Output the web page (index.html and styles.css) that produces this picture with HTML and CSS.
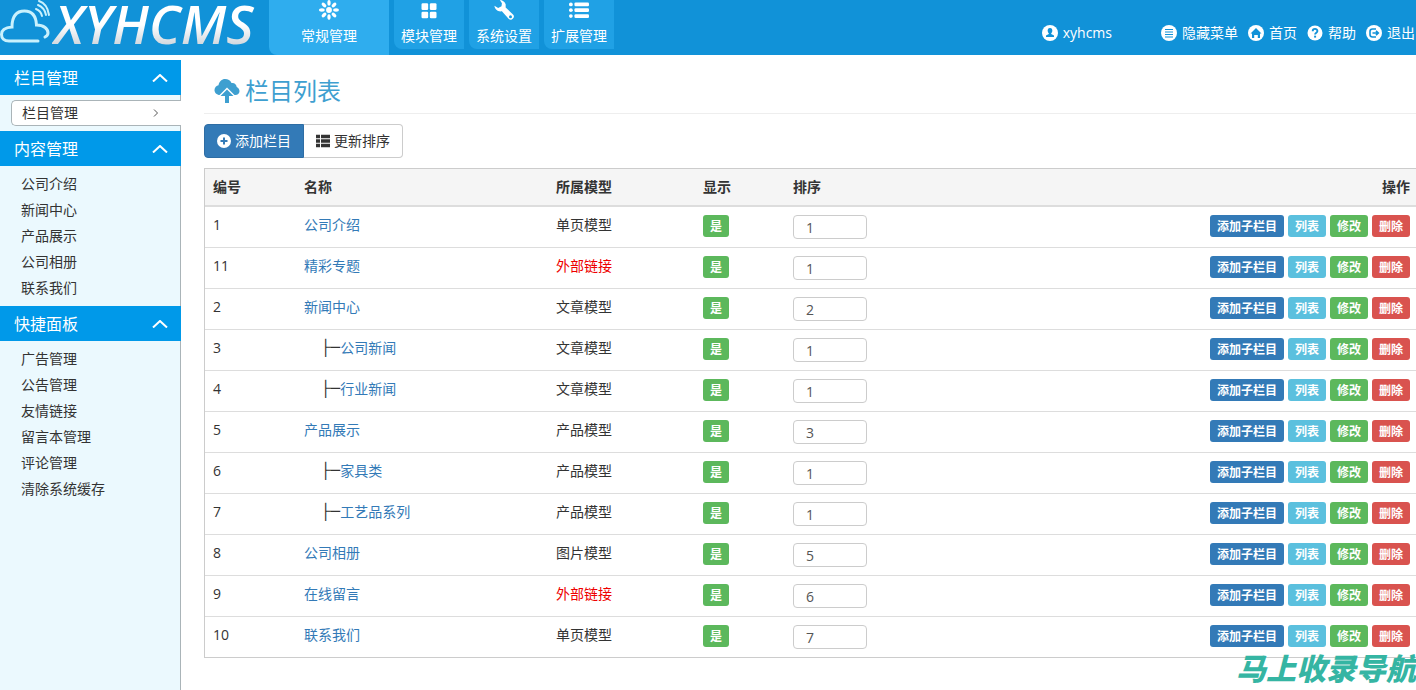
FILE: index.html
```
<!DOCTYPE html>
<html lang="zh-CN">
<head>
<meta charset="utf-8">
<title>栏目列表 - XYHCMS</title>
<link rel="stylesheet" href="styles.css">
</head>
<body>
<header class="topbar">
  <a class="logo" href="#">
    <svg class="logo-cloud" viewBox="0 0 52 46" fill="none" stroke-linecap="round">
      <path d="M38 41H9C4 41 1.500 38 1.500 34.500C1.500 30 5 27.500 12 27C12 16 17 11 24.500 11C32 11 36 16 36.500 25C44 25 48 29 48 33C48 35 47 36 45 37" stroke="#c9f1fd" stroke-width="3"/>
      <path d="M36 9C39 10 41 12 42 16M38 5C43 7 45 10 46 15M39 1C45 3 48 8 49 15" stroke="#c9f1fd" stroke-width="2"/>
    </svg>
    <span class="logo-text">XYHCMS</span>
  </a>
  <nav class="modules">
    <a class="module active" href="#">
      <svg class="module-icon" viewBox="0 0 24 24" fill="#fff"><circle cx="12" cy="12" r="3.500"/><g id="ray"><ellipse cx="12" cy="3.500" rx="2" ry="3.500"/><ellipse cx="12" cy="20.500" rx="2" ry="3.500"/><ellipse cx="3.500" cy="12" rx="3.500" ry="2"/><ellipse cx="20.500" cy="12" rx="3.500" ry="2"/></g><use href="#ray" transform="rotate(45 12 12)"/></svg>
      <span>常规管理</span>
    </a>
    <a class="module" href="#">
      <svg class="module-icon" viewBox="0 0 24 24" fill="#fff"><rect x="3" y="4" width="8" height="8" rx="1.500"/><rect x="13" y="4" width="8" height="8" rx="1.500"/><rect x="3" y="14" width="8" height="8" rx="1.500"/><rect x="13" y="14" width="8" height="8" rx="1.500"/></svg>
      <span>模块管理</span>
    </a>
    <a class="module" href="#">
      <svg class="module-icon" viewBox="0 0 24 24"><path d="M7 0C10 0 13 2 14 5L14 9L22.500 17A3.600 3.600 0 0 1 17.500 22.500L9.500 13.500C5 14.500 1 11.500 .5 7L5 9.500L9 7.500L9.500 4Z" fill="#fff"/><circle cx="19.800" cy="20" r="1.800" fill="#159cde"/></svg>
      <span>系统设置</span>
    </a>
    <a class="module" href="#">
      <svg class="module-icon" viewBox="0 0 24 24" fill="#fff"><rect x="0" y="3" width="4.500" height="4.500" rx="2.200"/><rect x="0" y="10" width="4.500" height="4.500" rx="2.200"/><rect x="0" y="17" width="4.500" height="4.500" rx="2.200"/><rect x="6.500" y="3" width="17.500" height="4.500" rx="1.500"/><rect x="6.500" y="10" width="17.500" height="4.500" rx="1.500"/><rect x="6.500" y="17" width="17.500" height="4.500" rx="1.500"/></svg>
      <span>扩展管理</span>
    </a>
  </nav>
  <nav class="tools">
    <a class="tool user" href="#"><svg viewBox="0 0 16 16"><circle cx="8" cy="8" r="8" fill="#fff"/><path d="M8 3C6 3 5.500 4.500 5.700 6C5.800 7 6.500 8 6.800 8.300V9L4 10.500V12H12V10.500L9.200 9V8.300C9.500 8 10.200 7 10.300 6C10.500 4.500 10 3 8 3Z" fill="#1192d8"/></svg>xyhcms</a>
    <a class="tool" href="#"><svg viewBox="0 0 16 16"><circle cx="8" cy="8" r="8" fill="#fff"/><path d="M4 4.500H12M4 7H12M4 9.500H12M4 12H12" stroke="#1192d8" stroke-width="1.200"/></svg>隐藏菜单</a>
    <a class="tool" href="#"><svg viewBox="0 0 16 16"><circle cx="8" cy="8" r="8" fill="#fff"/><path d="M2.500 8.500L8 3L13.500 8.500H12V13H9.800V10H6.200V13H4V8.500Z" fill="#1192d8"/></svg>首页</a>
    <a class="tool" href="#"><svg viewBox="0 0 16 16"><circle cx="8" cy="8" r="7.500" fill="#fff"/><path d="M5.700 6.200C5.700 3.200 10.400 3.200 10.400 6C10.400 7.700 8.100 7.700 8.100 9.600" fill="none" stroke="#1192d8" stroke-width="1.900"/><rect x="7.100" y="10.700" width="2" height="1.900" fill="#1192d8"/></svg>帮助</a>
    <a class="tool" href="#"><svg viewBox="0 0 16 16"><circle cx="8" cy="8" r="8" fill="#fff"/><path d="M10 4H6.500C5 4 4 5 4 6.500V9.500C4 11 5 12 6.500 12H10M6.500 8H12M10 5.800L12.300 8L10 10.200" fill="none" stroke="#1192d8" stroke-width="1.600"/></svg>退出</a>
  </nav>
</header>
<div class="layout">
  <aside class="sidebar">
    <section>
      <h2 class="group-title">栏目管理<svg class="chevron" viewBox="0 0 16 8"><path d="M1 7.500L8 1L15 7.500"/></svg></h2>
      <ul class="menu">
        <li><a class="menu-link current" href="#">栏目管理<svg class="arrow" viewBox="0 0 6 8"><path d="M1 .5L4.500 4L1 7.500"/></svg></a></li>
      </ul>
    </section>
    <section>
      <h2 class="group-title">内容管理<svg class="chevron" viewBox="0 0 16 8"><path d="M1 7.500L8 1L15 7.500"/></svg></h2>
      <ul class="menu">
        <li><a class="menu-link" href="#">公司介绍</a></li>
        <li><a class="menu-link" href="#">新闻中心</a></li>
        <li><a class="menu-link" href="#">产品展示</a></li>
        <li><a class="menu-link" href="#">公司相册</a></li>
        <li><a class="menu-link" href="#">联系我们</a></li>
      </ul>
    </section>
    <section>
      <h2 class="group-title">快捷面板<svg class="chevron" viewBox="0 0 16 8"><path d="M1 7.500L8 1L15 7.500"/></svg></h2>
      <ul class="menu">
        <li><a class="menu-link" href="#">广告管理</a></li>
        <li><a class="menu-link" href="#">公告管理</a></li>
        <li><a class="menu-link" href="#">友情链接</a></li>
        <li><a class="menu-link" href="#">留言本管理</a></li>
        <li><a class="menu-link" href="#">评论管理</a></li>
        <li><a class="menu-link" href="#">清除系统缓存</a></li>
      </ul>
    </section>
  </aside>
  <main class="content">
    <h1 class="page-title"><svg class="title-icon" viewBox="0 0 26 26"><path d="M6 17C2.500 17 .5 14.500 .5 12C.5 9.500 2.500 7.500 4.500 7.300C5 3.500 8 1 11 1C14 1 16.500 2.500 17.500 5C20.500 4.500 22.500 6.500 22.700 9C24.500 10 25.500 11.500 25.500 13.300C25.500 15.500 23.500 17 21.500 17H20.500L13 9.500L5.500 17Z"/><path d="M13 11.500L19.500 18H15V25H11V18H6.500Z"/></svg>栏目列表</h1>
    <div class="btn-group">
      <button class="btn btn-primary" type="button"><svg viewBox="0 0 14 14"><circle cx="7" cy="7" r="7" fill="#fff"/><path d="M7 3.500V10.500M3.500 7H10.500" stroke="#337ab7" stroke-width="2"/></svg>添加栏目</button>
      <button class="btn" type="button"><svg viewBox="0 0 14 14"><path d="M0 2.500H4M5 2.500H14M0 7H4M5 7H14M0 11.500H4M5 11.500H14" stroke="#333" stroke-width="3.400"/></svg>更新排序</button>
    </div>
    <table class="list">
      <colgroup><col class="c-id"><col class="c-name"><col class="c-model"><col class="c-show"><col class="c-sort"><col></colgroup>
      <thead><tr><th>编号</th><th>名称</th><th>所属模型</th><th>显示</th><th>排序</th><th class="ops-head">操作</th></tr></thead>
      <tbody>
        <tr><td>1</td><td><a href="#">公司介绍</a></td><td>单页模型</td><td><span class="label green">是</span></td><td><input class="sort" type="text" value="1" aria-label="公司介绍排序"></td><td><div class="ops"><a class="label blue" href="#">添加子栏目</a><a class="label cyan" href="#">列表</a><a class="label green" href="#">修改</a><a class="label red" href="#">删除</a></div></td></tr>
        <tr><td>11</td><td><a href="#">精彩专题</a></td><td class="external">外部链接</td><td><span class="label green">是</span></td><td><input class="sort" type="text" value="1" aria-label="精彩专题排序"></td><td><div class="ops"><a class="label blue" href="#">添加子栏目</a><a class="label cyan" href="#">列表</a><a class="label green" href="#">修改</a><a class="label red" href="#">删除</a></div></td></tr>
        <tr><td>2</td><td><a href="#">新闻中心</a></td><td>文章模型</td><td><span class="label green">是</span></td><td><input class="sort" type="text" value="2" aria-label="新闻中心排序"></td><td><div class="ops"><a class="label blue" href="#">添加子栏目</a><a class="label cyan" href="#">列表</a><a class="label green" href="#">修改</a><a class="label red" href="#">删除</a></div></td></tr>
        <tr><td>3</td><td><div class="child"><span class="branch">├─</span><a href="#">公司新闻</a></div></td><td>文章模型</td><td><span class="label green">是</span></td><td><input class="sort" type="text" value="1" aria-label="公司新闻排序"></td><td><div class="ops"><a class="label blue" href="#">添加子栏目</a><a class="label cyan" href="#">列表</a><a class="label green" href="#">修改</a><a class="label red" href="#">删除</a></div></td></tr>
        <tr><td>4</td><td><div class="child"><span class="branch">├─</span><a href="#">行业新闻</a></div></td><td>文章模型</td><td><span class="label green">是</span></td><td><input class="sort" type="text" value="1" aria-label="行业新闻排序"></td><td><div class="ops"><a class="label blue" href="#">添加子栏目</a><a class="label cyan" href="#">列表</a><a class="label green" href="#">修改</a><a class="label red" href="#">删除</a></div></td></tr>
        <tr><td>5</td><td><a href="#">产品展示</a></td><td>产品模型</td><td><span class="label green">是</span></td><td><input class="sort" type="text" value="3" aria-label="产品展示排序"></td><td><div class="ops"><a class="label blue" href="#">添加子栏目</a><a class="label cyan" href="#">列表</a><a class="label green" href="#">修改</a><a class="label red" href="#">删除</a></div></td></tr>
        <tr><td>6</td><td><div class="child"><span class="branch">├─</span><a href="#">家具类</a></div></td><td>产品模型</td><td><span class="label green">是</span></td><td><input class="sort" type="text" value="1" aria-label="家具类排序"></td><td><div class="ops"><a class="label blue" href="#">添加子栏目</a><a class="label cyan" href="#">列表</a><a class="label green" href="#">修改</a><a class="label red" href="#">删除</a></div></td></tr>
        <tr><td>7</td><td><div class="child"><span class="branch">├─</span><a href="#">工艺品系列</a></div></td><td>产品模型</td><td><span class="label green">是</span></td><td><input class="sort" type="text" value="1" aria-label="工艺品系列排序"></td><td><div class="ops"><a class="label blue" href="#">添加子栏目</a><a class="label cyan" href="#">列表</a><a class="label green" href="#">修改</a><a class="label red" href="#">删除</a></div></td></tr>
        <tr><td>8</td><td><a href="#">公司相册</a></td><td>图片模型</td><td><span class="label green">是</span></td><td><input class="sort" type="text" value="5" aria-label="公司相册排序"></td><td><div class="ops"><a class="label blue" href="#">添加子栏目</a><a class="label cyan" href="#">列表</a><a class="label green" href="#">修改</a><a class="label red" href="#">删除</a></div></td></tr>
        <tr><td>9</td><td><a href="#">在线留言</a></td><td class="external">外部链接</td><td><span class="label green">是</span></td><td><input class="sort" type="text" value="6" aria-label="在线留言排序"></td><td><div class="ops"><a class="label blue" href="#">添加子栏目</a><a class="label cyan" href="#">列表</a><a class="label green" href="#">修改</a><a class="label red" href="#">删除</a></div></td></tr>
        <tr><td>10</td><td><a href="#">联系我们</a></td><td>单页模型</td><td><span class="label green">是</span></td><td><input class="sort" type="text" value="7" aria-label="联系我们排序"></td><td><div class="ops"><a class="label blue" href="#">添加子栏目</a><a class="label cyan" href="#">列表</a><a class="label green" href="#">修改</a><a class="label red" href="#">删除</a></div></td></tr>
      </tbody>
    </table>
  </main>
</div>
<div class="watermark">马上收录导航</div>
</body>
</html>
```
FILE: styles.css
```
* { box-sizing: border-box; }

body {
  margin: 0;
  min-height: 100vh;
  display: flex;
  flex-direction: column;
  overflow: hidden;
  position: relative;
  background: #fff;
  color: #333;
  font: 14px/20px "Open Sans", "Noto Sans CJK SC", sans-serif;
}

a { color: #337ab7; text-decoration: none; }
svg { flex: none; }

/* Top bar */
.topbar {
  display: flex;
  height: 55px;
  background: #1192d8;
}
.logo {
  display: flex;
  width: 269px;
}
.logo-cloud { width: 52px; height: 46px; }
.logo-text {
  padding: 0 6px 0 2px;
  font: italic 600 53px/48px "Open Sans", sans-serif;
  color: transparent;
  background: linear-gradient(#fff 45%, #d3d9df 80%);
  -webkit-background-clip: text;
  background-clip: text;
}
.modules {
  display: flex;
  align-items: flex-start;
  gap: 5px;
}
.module {
  display: flex;
  flex-direction: column;
  align-items: center;
  gap: 6px;
  width: 70px;
  height: 49px;
  border-radius: 0 0 0 8px;
  background: #20a1e5;
  color: #fff;
}
.module.active {
  width: 120px;
  height: 55px;
  background: #2fadee;
}
.module-icon { width: 24px; height: 20px; }
.tools {
  display: flex;
  align-items: center;
  gap: 10px;
  margin-left: auto;
  padding: 11px 1px 0 0;
}
.tool {
  display: flex;
  align-items: center;
  gap: 5px;
  color: #fff;
}
.tool svg { width: 16px; height: 16px; }
.tool.user { margin-right: 39px; }

/* Sidebar */
.layout {
  display: flex;
  flex: 1;
  padding-top: 5px;
}
.sidebar {
  width: 181px;
  flex: none;
  background: linear-gradient(90deg, #ebf9fe calc(100% - 1px), #aab4b8 0);
}
.group-title {
  display: flex;
  align-items: center;
  justify-content: space-between;
  height: 35px;
  margin: 0;
  padding: 0 13px 0 14px;
  background: #0099e9;
  color: #fff;
  font-size: 16px;
  font-weight: 400;
}
.chevron { width: 16px; height: 8px; fill: none; stroke: #fff; stroke-width: 2; }
.menu {
  margin: 0;
  padding: 5px 0 5px 11px;
  list-style: none;
}
.menu-link {
  display: flex;
  align-items: center;
  justify-content: space-between;
  height: 26px;
  padding: 0 22px 0 10px;
  color: #333;
}
.menu-link.current {
  border: 1px solid #aab4b8;
  border-right: 0;
  border-radius: 5px 0 0 5px;
  background: #fff;
}
.arrow { width: 6px; height: 8px; fill: none; stroke: #555; }

/* Content */
.content {
  flex: 1;
  min-width: 0;
  padding: 10px 0 0 23px;
}
.page-title {
  display: flex;
  align-items: center;
  gap: 5px;
  height: 44px;
  margin: 0 0 10px;
  padding: 0 0 2px 10px;
  border-bottom: 1px solid #eee;
  color: #3e9fd0;
  font-size: 24px;
  line-height: 32px;
  font-weight: 400;
}
.title-icon { width: 26px; height: 26px; fill: #3e9fd0; }
.btn-group { display: flex; margin-bottom: 10px; }
.btn {
  display: flex;
  align-items: center;
  gap: 4px;
  height: 34px;
  padding: 0 12px;
  border: 1px solid #ccc;
  border-left: 0;
  border-radius: 0 4px 4px 0;
  background: #fff;
  color: #333;
  font: inherit;
}
.btn svg { width: 14px; height: 14px; }
.btn-primary {
  border: 1px solid #2e6da4;
  border-radius: 4px 0 0 4px;
  background: #337ab7;
  color: #fff;
}

.list {
  width: 100%;
  table-layout: fixed;
  border-collapse: separate;
  border-spacing: 0;
  border: 1px solid #ccc;
  border-right: 0;
}
.c-id { width: 91px; }
.c-name { width: 252px; }
.c-model { width: 147px; }
.c-show { width: 90px; }
.c-sort { width: 90px; }
.list th, .list td {
  padding: 8px;
  text-align: left;
  vertical-align: top;
}
.list th {
  border-bottom: 2px solid #ddd;
  background: #f5f5f5;
}
.list .ops-head { padding-right: 6px; text-align: right; }
.list td { border-bottom: 1px solid #ddd; }
.list tr:last-child td { border-bottom: 0; }
.list td:last-child { padding-right: 6px; }
.list .external { color: #e00; }
.child { display: flex; padding-left: 17px; }
.branch { font-family: "Liberation Mono", monospace; font-size: 16px; }
.label {
  display: block;
  width: max-content;
  height: 22px;
  padding: 1px 7px 0;
  border-radius: 3px;
  color: #fff;
  font-size: 12px;
  line-height: 21px;
  font-weight: 700;
}
.blue { background: #337ab7; }
.cyan { background: #5bc0de; }
.green { background: #5cb85c; }
.red { background: #d9534f; }
.ops { display: flex; justify-content: flex-end; gap: 4px; }
.sort {
  display: block;
  width: 74px;
  height: 24px;
  padding: 0 12px;
  border: 1px solid #ccc;
  border-radius: 4px;
  background: #fff;
  color: #555;
  font: inherit;
}

/* Overlay mark in the page corner */
.watermark {
  position: absolute;
  left: calc(100% - 180px);
  bottom: 3px;
  color: #35b5a3;
  font: italic 900 30px/40px "Noto Sans CJK SC", sans-serif;
  white-space: nowrap;
  pointer-events: none;
}
```
